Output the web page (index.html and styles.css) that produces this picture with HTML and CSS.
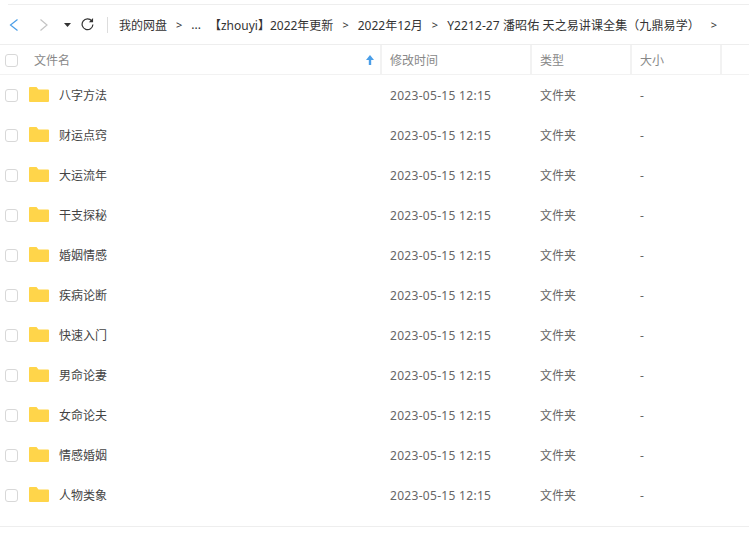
FILE: index.html
```html
<!DOCTYPE html>
<html lang="zh-CN">
<head>
    <meta charset="UTF-8">
    <meta name="viewport" content="width=device-width, initial-scale=1.0">
    <title>我的网盘</title>
    <link rel="stylesheet" href="styles.css">
</head>
<body>
    <div class="toolbar">
        <svg class="nav-icon" width="12" height="16" viewBox="0 0 12 16"><path d="M9.5 2.5 2.5 8l7 5.5" fill="none" stroke="#4a9ee8" stroke-width="1.2"/></svg>
        <svg class="nav-icon next" width="12" height="16" viewBox="0 0 12 16"><path d="M2.5 2.5 9 8l-6.5 5.5" fill="none" stroke="#c4c4c4" stroke-width="1.2"/></svg>
        <svg class="nav-icon drop" width="7" height="4" viewBox="0 0 7 4"><path d="M0 0h7L3.5 4z" fill="#333"/></svg>
        <svg class="nav-icon refresh" width="13" height="13" viewBox="0 0 14 14"><path d="M11.6 3.2A5.8 5.8 0 1 0 12.8 7" fill="none" stroke="#333" stroke-width="1.3"/><path d="M8.4 4.6h4.6V0z" fill="#333"/></svg>
        <div class="sep"></div>
        <div class="crumbs">
            <span>我的网盘</span><span class="gt">&gt;</span>
            <span class="dots">...</span>
            <span>【zhouyi】2022年更新</span><span class="gt">&gt;</span>
            <span>2022年12月</span><span class="gt">&gt;</span>
            <span class="last">Y2212-27 潘昭佑 天之易讲课全集（九鼎易学）</span><span class="gt gt-end">&gt;</span>
        </div>
    </div>

    <div class="head">
        <div class="cell name"><span class="check"></span><span class="head-name">文件名</span>
            <svg class="sort" width="8" height="10" viewBox="0 0 8 10"><path d="M4 0 8 5H5.2v5H2.8V5H0z" fill="#4a9ee8"/></svg>
        </div>
        <div class="cell time">修改时间</div>
        <div class="cell type">类型</div>
        <div class="cell size">大小</div>
    </div>

    <div id="rows" class="rows"></div>

    <script>
        const names = ['八字方法', '财运点窍', '大运流年', '干支探秘', '婚姻情感', '疾病论断', '快速入门', '男命论妻', '女命论夫', '情感婚姻', '人物类象'];
        const folder = '<svg class="folder" width="20" height="15" viewBox="0 0 20 15"><path d="M1 0h6.5l2 2.5H19a1 1 0 0 1 1 1V14a1 1 0 0 1-1 1H1a1 1 0 0 1-1-1V1a1 1 0 0 1 1-1z" fill="#ffd54a"/></svg>';
        let html = '';
        names.forEach(function(n) {
            html += '<div class="row"><div class="cell name"><span class="check"></span>' + folder + '<span class="file">' + n + '</span></div>'
                + '<div class="cell time">2023-05-15 12:15</div><div class="cell type">文件夹</div><div class="cell size">-</div></div>';
        });
        document.getElementById('rows').innerHTML = html;
    </script>
</body>
</html>
```

FILE: styles.css
```css
html, body { margin: 0; padding: 0; background: #fff; overflow: hidden; }
body { height: 544px; padding-top: 4px; box-sizing: border-box; font-family: "Noto Sans", "Noto Sans CJK SC", sans-serif; font-size: 12px; color: #666; }
.toolbar { height: 39px; margin-left: 8px; border-top: 1px solid #eee; display: flex; align-items: center; color: #333; white-space: nowrap; }
.nav-icon { flex: none; }
.next { margin-left: 18px; }
.drop { margin-left: 14px; }
.refresh { margin-left: 10px; }
.sep { width: 1px; height: 16px; background: #ddd; margin-left: 13px; }
.crumbs { display: flex; align-items: center; margin-left: 11px; }
.gt { margin: 0 9px; font-size: 11px; }
.dots { margin-right: 8px; }
.last { letter-spacing: .1px; }
.gt-end { margin-left: 11px; }
.head { height: 29px; display: flex; border-top: 1px solid #eee; border-bottom: 1px solid #f2f2f2; width: 749px; }
.head .cell { color: #888; border-right: 2px solid #f2f2f2; }
.cell { display: flex; align-items: center; flex: none; box-sizing: border-box; }
.name { width: 382px; padding-left: 5px; }
.time { width: 150px; padding-left: 8px; }
.type { width: 100px; padding-left: 8px; }
.size { width: 90px; padding-left: 8px; }
.check { width: 11px; height: 11px; border: 1px solid #d8d8d8; border-radius: 3px; flex: none; margin-top: 1px; }
.head-name { margin-left: 16px; }
.sort { margin-left: auto; margin-right: 6px; }
.rows { border-bottom: 1px solid #eee; height: 451px; }
.row { height: 40px; display: flex; }
.row .time { letter-spacing: .3px; }
.folder { margin-left: 11px; margin-bottom: 1px; flex: none; }
.file { margin-left: 10px; color: #444; }
```
